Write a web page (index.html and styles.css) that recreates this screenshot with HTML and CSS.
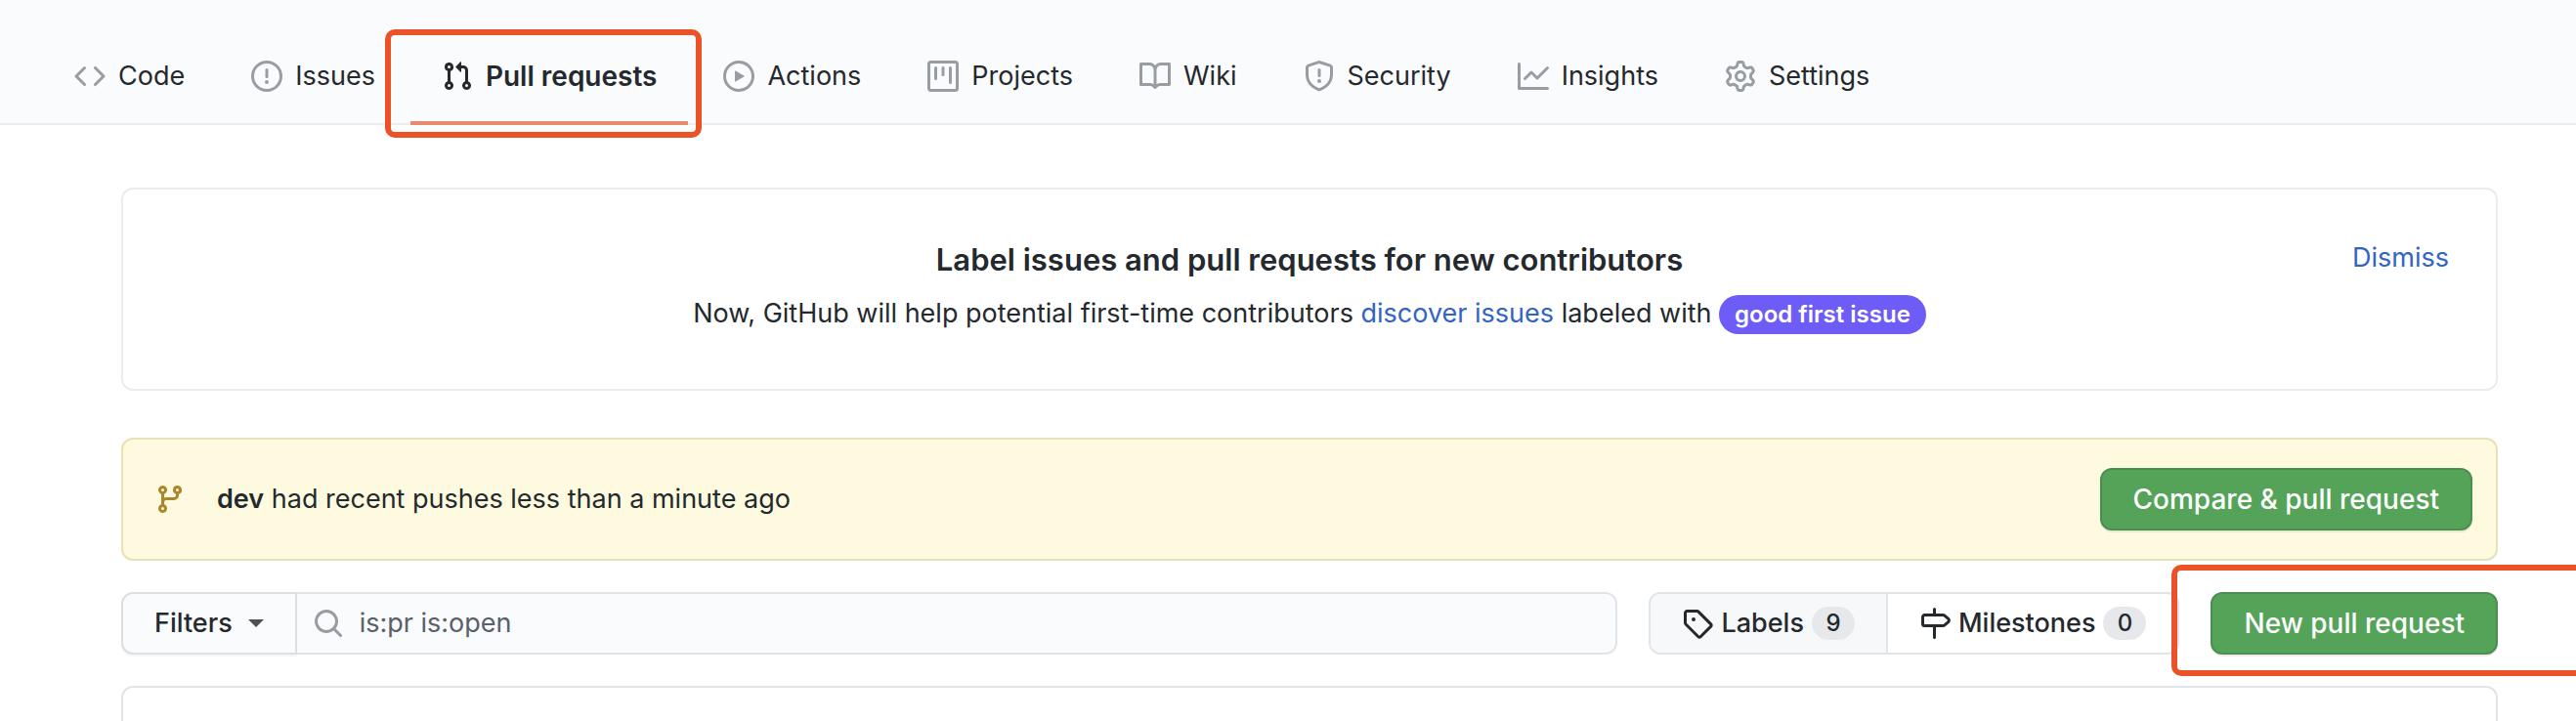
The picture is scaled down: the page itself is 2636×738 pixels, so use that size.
FILE: index.html
```html
<!DOCTYPE html>
<html lang="en">
<head>
<meta charset="utf-8">
<title>Pull requests</title>
<link rel="stylesheet" href="styles.css">
</head>
<body>
<header class="repo-header">
  <nav class="tabs" aria-label="Repository">
    <a class="tab" href="#"><svg class="icon" viewBox="0 0 16 16"><path fill-rule="evenodd" d="M4.72 3.22a.75.75 0 011.06 1.06L2.06 8l3.72 3.72a.75.75 0 11-1.06 1.06L.47 8.53a.75.75 0 010-1.06l4.25-4.25zm6.56 0a.75.75 0 10-1.06 1.06L13.94 8l-3.72 3.72a.75.75 0 101.06 1.06l4.25-4.25a.75.75 0 000-1.06l-4.25-4.25z"/></svg><span>Code</span></a>
    <a class="tab" href="#"><svg class="icon" viewBox="0 0 16 16"><path fill-rule="evenodd" d="M8 1.5a6.5 6.5 0 100 13 6.5 6.5 0 000-13zM0 8a8 8 0 1116 0A8 8 0 010 8zm9 3a1 1 0 11-2 0 1 1 0 012 0zm-.25-6.25a.75.75 0 00-1.5 0v3.5a.75.75 0 001.5 0v-3.5z"/></svg><span>Issues</span></a>
    <a class="tab tab-selected" href="#" aria-current="page"><svg class="icon" viewBox="0 0 16 16"><path fill-rule="evenodd" d="M7.177 3.073L9.573.677A.25.25 0 0110 .854v4.792a.25.25 0 01-.427.177L7.177 3.427a.25.25 0 010-.354zM3.75 2.5a.75.75 0 100 1.5.75.75 0 000-1.5zm-2.25.75a2.25 2.25 0 113 2.122v5.256a2.251 2.251 0 11-1.5 0V5.372A2.25 2.25 0 011.5 3.25zM11 2.5h-1V4h1a1 1 0 011 1v5.628a2.251 2.251 0 101.5 0V5A2.5 2.5 0 0011 2.5zm1 10.25a.75.75 0 111.5 0 .75.75 0 01-1.5 0zM3.75 12a.75.75 0 100 1.5.75.75 0 000-1.5z"/></svg><span>Pull requests</span><i class="marker marker-tab"></i></a>
    <a class="tab" href="#"><svg class="icon" viewBox="0 0 16 16"><path fill-rule="evenodd" d="M1.5 8a6.5 6.5 0 1113 0 6.5 6.5 0 01-13 0zM8 0a8 8 0 100 16A8 8 0 008 0zM6.379 5.227A.25.25 0 006 5.442v5.117a.25.25 0 00.379.214l4.264-2.559a.25.25 0 000-.428L6.379 5.227z"/></svg><span>Actions</span></a>
    <a class="tab" href="#"><svg class="icon" viewBox="0 0 16 16"><path fill-rule="evenodd" d="M1.75 0A1.75 1.75 0 000 1.75v12.5C0 15.216.784 16 1.75 16h12.5A1.75 1.75 0 0016 14.25V1.75A1.75 1.75 0 0014.25 0H1.75zM1.5 1.75a.25.25 0 01.25-.25h12.5a.25.25 0 01.25.25v12.5a.25.25 0 01-.25.25H1.75a.25.25 0 01-.25-.25V1.75zM11.75 3a.75.75 0 00-.75.75v7.5a.75.75 0 001.5 0v-7.5a.75.75 0 00-.75-.75zm-8.25.75a.75.75 0 011.5 0v5.5a.75.75 0 01-1.5 0v-5.5zM8 3a.75.75 0 00-.75.75v3.5a.75.75 0 001.5 0v-3.5A.75.75 0 008 3z"/></svg><span>Projects</span></a>
    <a class="tab" href="#"><svg class="icon" viewBox="0 0 16 16"><path fill-rule="evenodd" d="M0 1.75A.75.75 0 01.75 1h4.253c1.227 0 2.317.59 3 1.501A3.744 3.744 0 0111.006 1h4.245a.75.75 0 01.75.75v10.5a.75.75 0 01-.75.75h-4.507a2.25 2.25 0 00-1.591.659l-.622.621a.75.75 0 01-1.06 0l-.622-.621A2.25 2.25 0 005.258 13H.75a.75.75 0 01-.75-.75V1.75zm8.755 3a2.25 2.25 0 012.25-2.25H14.5v9h-3.757c-.71 0-1.4.201-1.992.572l.004-7.322zm-1.504 7.324l.004-5.073-.002-2.253A2.25 2.25 0 005.003 2.5H1.5v9h3.757a3.75 3.75 0 011.994.574z"/></svg><span>Wiki</span></a>
    <a class="tab" href="#"><svg class="icon" viewBox="0 0 16 16"><path fill-rule="evenodd" d="M7.467.133a1.75 1.75 0 011.066 0l5.25 1.68A1.75 1.75 0 0115 3.48V7c0 1.566-.32 3.182-1.303 4.682-.983 1.498-2.585 2.813-5.032 3.855a1.7 1.7 0 01-1.33 0c-2.447-1.042-4.049-2.357-5.032-3.855C1.32 10.182 1 8.566 1 7V3.48a1.75 1.75 0 011.217-1.667l5.25-1.68zm.61 1.429a.25.25 0 00-.153 0l-5.25 1.68a.25.25 0 00-.174.238V7c0 1.358.275 2.666 1.057 3.86.784 1.194 2.121 2.34 4.366 3.297a.2.2 0 00.154 0c2.245-.956 3.582-2.104 4.366-3.298C13.225 9.666 13.5 8.36 13.5 7V3.48a.25.25 0 00-.174-.237l-5.25-1.68zM9 10.5a1 1 0 11-2 0 1 1 0 012 0zm-.25-5.75a.75.75 0 10-1.5 0v3a.75.75 0 001.5 0v-3z"/></svg><span>Security</span></a>
    <a class="tab" href="#"><svg class="icon" viewBox="0 0 16 16"><path fill-rule="evenodd" d="M1.5 1.75a.75.75 0 00-1.5 0v12.5c0 .414.336.75.75.75h14.5a.75.75 0 000-1.5H1.5V1.75zm14.28 2.53a.75.75 0 00-1.06-1.06L10 7.94 7.53 5.47a.75.75 0 00-1.06 0L3.22 8.72a.75.75 0 001.06 1.06L7 7.06l2.47 2.47a.75.75 0 001.06 0l5.25-5.25z"/></svg><span>Insights</span></a>
    <a class="tab" href="#"><svg class="icon" viewBox="0 0 16 16"><path fill-rule="evenodd" d="M7.429 1.525a6.593 6.593 0 011.142 0c.036.003.108.036.137.146l.289 1.105c.147.56.55.967.997 1.189.174.086.341.183.501.29.417.278.97.423 1.53.27l1.102-.303c.11-.03.175.016.195.046.219.31.41.641.573.989.014.031.022.11-.059.19l-.815.806c-.411.406-.562.957-.53 1.456a4.588 4.588 0 010 .582c-.032.499.119 1.05.53 1.456l.815.806c.08.08.073.159.059.19a6.494 6.494 0 01-.573.99c-.02.029-.086.074-.195.045l-1.103-.303c-.559-.153-1.112-.008-1.529.27-.16.107-.327.204-.5.29-.449.222-.851.628-.998 1.189l-.289 1.105c-.029.11-.101.143-.137.146a6.613 6.613 0 01-1.142 0c-.036-.003-.108-.037-.137-.146l-.289-1.105c-.147-.56-.55-.967-.997-1.189a4.502 4.502 0 01-.501-.29c-.417-.278-.97-.423-1.53-.27l-1.102.303c-.11.03-.175-.016-.195-.046a6.492 6.492 0 01-.573-.989c-.014-.031-.022-.11.059-.19l.815-.806c.411-.406.562-.957.53-1.456a4.587 4.587 0 010-.582c.032-.499-.119-1.05-.53-1.456l-.815-.806c-.08-.08-.073-.159-.059-.19a6.44 6.44 0 01.573-.99c.02-.029.086-.075.195-.045l1.103.303c.559.153 1.112.008 1.529-.27.16-.107.327-.204.5-.29.449-.222.851-.628.998-1.189l.289-1.105c.029-.11.101-.143.137-.146zM8 0c-.236 0-.47.01-.701.03-.743.065-1.29.615-1.458 1.261l-.29 1.106c-.017.066-.078.158-.211.224a5.994 5.994 0 00-.668.386c-.123.082-.233.09-.3.071L3.27 2.776c-.644-.177-1.392.02-1.82.63a7.977 7.977 0 00-.704 1.217c-.315.675-.111 1.422.363 1.891l.815.806c.05.048.098.147.088.294a6.084 6.084 0 000 .772c.01.147-.038.246-.088.294l-.815.806c-.474.469-.678 1.216-.363 1.891.2.428.436.835.704 1.218.428.609 1.176.806 1.82.63l1.103-.303c.066-.019.176-.011.299.071.213.143.436.272.668.386.133.066.194.158.212.224l.289 1.106c.169.646.715 1.196 1.458 1.26a8.094 8.094 0 001.402 0c.743-.064 1.29-.614 1.458-1.26l.29-1.106c.017-.066.078-.158.211-.224a5.98 5.98 0 00.668-.386c.123-.082.233-.09.3-.071l1.102.302c.644.177 1.392-.02 1.82-.63.268-.382.505-.789.704-1.217.315-.675.111-1.422-.364-1.891l-.814-.806c-.05-.048-.098-.147-.088-.294a6.1 6.1 0 000-.772c-.01-.147.039-.246.088-.294l.814-.806c.475-.469.679-1.216.364-1.891a7.992 7.992 0 00-.704-1.218c-.428-.609-1.176-.806-1.82-.63l-1.103.303c-.066.019-.176.011-.299-.071a5.991 5.991 0 00-.668-.386c-.133-.066-.194-.158-.212-.224L10.16 1.29C9.99.645 9.444.095 8.701.031A8.094 8.094 0 008 0zm1.5 8a1.5 1.5 0 11-3 0 1.5 1.5 0 013 0zM11 8a3 3 0 11-6 0 3 3 0 016 0z"/></svg><span>Settings</span></a>
  </nav>
</header>
<main class="content">
  <section class="notice">
    <button class="dismiss" type="button">Dismiss</button>
    <h1 class="notice-title">Label issues and pull requests for new contributors</h1>
    <p class="notice-text">Now, GitHub will help potential first-time contributors <a class="link" href="#">discover issues</a> labeled with <span class="issue-label">good first issue</span></p>
  </section>
  <section class="flash">
    <svg class="icon flash-icon" viewBox="0 0 16 16"><path fill-rule="evenodd" d="M11.75 2.5a.75.75 0 100 1.5.75.75 0 000-1.5zm-2.25.75a2.25 2.25 0 113 2.122V6A2.5 2.5 0 0110 8.5H6a1 1 0 00-1 1v1.128a2.251 2.251 0 11-1.5 0V5.372a2.25 2.25 0 111.5 0v1.836A2.492 2.492 0 016 7h4a1 1 0 001-1v-.628A2.25 2.25 0 019.5 3.25zM4.25 12a.75.75 0 100 1.5.75.75 0 000-1.5zM3.5 3.25a.75.75 0 111.5 0 .75.75 0 01-1.5 0z"/></svg>
    <p class="flash-text"><strong>dev</strong> had recent pushes less than a minute ago</p>
    <button class="button" type="button">Compare &amp; pull request</button>
  </section>
  <div class="toolbar">
    <form class="search">
      <button class="filters" type="button">Filters<span class="caret"></span></button>
      <label class="search-field">
        <svg class="icon" viewBox="0 0 16 16"><path fill-rule="evenodd" d="M11.5 7a4.499 4.499 0 11-8.998 0A4.499 4.499 0 0111.5 7zm-.82 4.74a6 6 0 111.06-1.06l3.04 3.04a.75.75 0 11-1.06 1.06l-3.04-3.04z"/></svg>
        <input class="search-input" type="text" value="is:pr is:open" aria-label="Search pull requests">
      </label>
    </form>
    <nav class="subnav" aria-label="Labels and milestones">
      <a class="subnav-item subnav-labels" href="#"><svg class="icon" viewBox="0 0 16 16"><path fill-rule="evenodd" d="M2.5 7.775V2.75a.25.25 0 01.25-.25h5.025a.25.25 0 01.177.073l6.25 6.25a.25.25 0 010 .354l-5.025 5.025a.25.25 0 01-.354 0l-6.25-6.25a.25.25 0 01-.073-.177zm-1.5 0V2.75C1 1.784 1.784 1 2.75 1h5.025c.464 0 .91.184 1.238.513l6.25 6.25a1.75 1.75 0 010 2.474l-5.026 5.026a1.75 1.75 0 01-2.474 0l-6.25-6.25A1.75 1.75 0 011 7.775zM6 5a1 1 0 100 2 1 1 0 000-2z"/></svg><span>Labels</span><span class="counter">9</span></a>
      <a class="subnav-item" href="#"><svg class="icon" viewBox="0 0 16 16"><path fill-rule="evenodd" d="M7.75 0a.75.75 0 01.75.75V3h3.634c.414 0 .814.147 1.13.414l2.07 1.75a1.75 1.75 0 010 2.672l-2.07 1.75a1.75 1.75 0 01-1.13.414H8.5v5.25a.75.75 0 11-1.5 0V10H2.75A1.75 1.75 0 011 8.25v-3.5C1 3.784 1.784 3 2.75 3H7V.75A.75.75 0 017.75 0zm0 8.5h4.384a.25.25 0 00.161-.06l2.07-1.75a.25.25 0 000-.38l-2.07-1.75a.25.25 0 00-.161-.06H2.75a.25.25 0 00-.25.25v3.5c0 .138.112.25.25.25h5z"/></svg><span>Milestones</span><span class="counter">0</span></a>
    </nav>
    <div class="new-request">
      <button class="button" type="button">New pull request</button>
      <i class="marker marker-button"></i>
    </div>
  </div>
  <section class="list" aria-label="Pull request list"></section>
</main>
</body>
</html>
```

FILE: styles.css
```css
* {
  box-sizing: border-box;
}

body {
  margin: 0;
  display: flex;
  flex-direction: column;
  min-height: 100vh;
  overflow-x: hidden;
  background: #fff;
  color: #24292e;
  font-family: Inter, "Liberation Sans", sans-serif;
  font-size: 27px;
  line-height: 40px;
}

a {
  color: inherit;
  text-decoration: none;
}

button,
input {
  font: inherit;
  color: inherit;
}

button {
  cursor: pointer;
}

.icon {
  flex: none;
  width: 32px;
  height: 32px;
  fill: currentColor;
}

/* Repository tabs */
.repo-header {
  padding: 32px 44px 0;
  background: #fafbfc;
  border-bottom: 2px solid #eaecef;
}

.tabs {
  display: flex;
  gap: 4px;
  margin-bottom: -2px;
}

.tab {
  position: relative;
  display: flex;
  align-items: center;
  gap: 13px;
  padding: 26px 32px;
  border-bottom: 4px solid transparent;
  white-space: nowrap;
}

.tab .icon {
  color: #989da3;
}

.tab-selected {
  border-bottom-color: #e78a70;
  font-size: 28px;
  font-weight: 600;
}

.tab-selected .icon {
  color: #24292e;
}

/* Highlight frames */
.marker {
  position: absolute;
  z-index: 1;
  border: 6px solid #ec5228;
  border-radius: 10px;
  pointer-events: none;
}

.marker-tab {
  inset: -2px -14px -17px -26px;
}

.marker-button {
  inset: -28px -120px -22px -40px;
}

.content {
  flex: 1;
  display: flex;
  flex-direction: column;
  padding: 64px 80px 0 124px;
}

.notice {
  position: relative;
  padding: 48px 48px 52px;
  border: 2px solid #eaecef;
  border-radius: 12px;
  text-align: center;
}

.notice-title {
  margin: 0 0 6px;
  font-size: 31px;
  line-height: 48px;
  font-weight: 600;
}

.notice-text {
  margin: 0;
  line-height: 50px;
}

.link,
.dismiss {
  color: #3264c4;
}

.dismiss {
  position: absolute;
  top: 50px;
  right: 48px;
  padding: 0;
  border: 0;
  background: none;
}

.issue-label {
  display: inline-block;
  padding: 0 16px;
  border-radius: 20px;
  background: #6d5cf6;
  color: #fff;
  font-size: 24px;
  line-height: 40px;
  font-weight: 600;
}

.flash {
  display: flex;
  align-items: center;
  gap: 32px;
  margin-top: 48px;
  padding: 29px 24px 29px 32px;
  border: 2px solid #e9e1b6;
  border-radius: 12px;
  background: #fefadf;
}

.flash-icon {
  color: #ab872b;
}

.flash-text {
  flex: 1;
  margin: 0;
}

.flash-text strong {
  font-weight: 600;
}

.button {
  padding: 10px 32px;
  border: 2px solid #4b8f50;
  border-radius: 12px;
  background: #54a358;
  box-shadow: 0 2px 0 rgba(27, 31, 35, 0.08);
  color: #fff;
  font-size: 28px;
  font-weight: 500;
  white-space: nowrap;
}

.toolbar {
  display: flex;
  gap: 32px;
  margin-top: 32px;
}

.search {
  flex: 1;
  display: flex;
  min-width: 0;
}

.filters {
  display: flex;
  align-items: center;
  gap: 16px;
  padding: 10px 32px;
  border: 2px solid #dcdfe2;
  border-radius: 12px 0 0 12px;
  background: #fafbfc;
  box-shadow: 0 2px 0 rgba(27, 31, 35, 0.04);
  font-weight: 500;
}

.caret {
  border: 8px solid transparent;
  border-top-color: #4d5156;
  border-bottom-width: 0;
}

.search-field {
  flex: 1;
  display: flex;
  align-items: center;
  gap: 16px;
  padding: 0 16px;
  border: 2px solid #e1e4e8;
  border-left: 0;
  border-radius: 0 12px 12px 0;
  background: #fafbfc;
  color: #989da3;
}

.search-input {
  flex: 1;
  min-width: 0;
  padding: 0;
  border: 0;
  outline: 0;
  background: none;
  color: #586069;
}

.subnav {
  display: flex;
  border: 2px solid #e1e4e8;
  border-radius: 12px;
  overflow: hidden;
}

.subnav-item {
  display: flex;
  align-items: center;
  gap: 8px;
  padding: 10px 32px;
  font-weight: 500;
}

.subnav-labels {
  border-right: 2px solid #e1e4e8;
  background: #f6f8fa;
}

.counter {
  min-width: 44px;
  border-radius: 18px;
  background: #e6e8eb;
  font-size: 24px;
  line-height: 34px;
  text-align: center;
}

.new-request {
  position: relative;
}

.list {
  flex: 1;
  margin-top: 32px;
  border: 2px solid #e1e4e8;
  border-bottom: 0;
  border-radius: 12px 12px 0 0;
}
```
